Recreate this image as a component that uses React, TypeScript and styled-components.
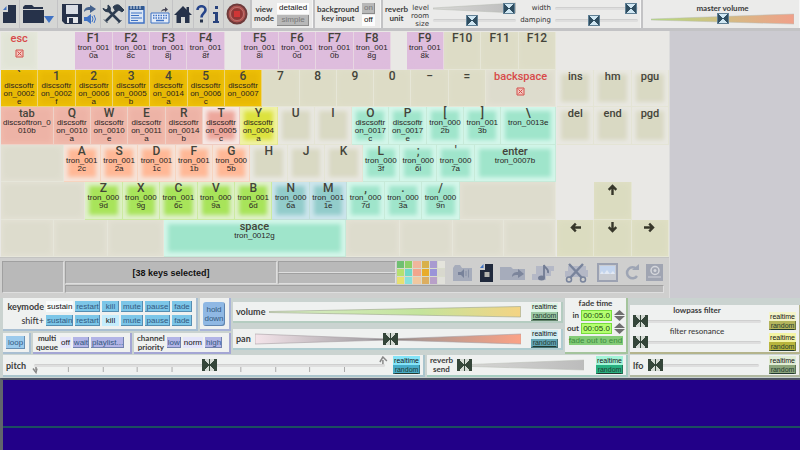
import React, { useState } from "react";
import styled, { createGlobalStyle, css } from "styled-components";

const Global = createGlobalStyle`
  *, *::before, *::after { box-sizing: border-box; }
  body { margin: 0; background: #cfd0cf; font-family: Lato, "Open Sans", sans-serif; color: #333; }
  button, input { font: inherit; color: inherit; margin: 0; padding: 0; border: 0; background: none; }
`;

/* ---------- shell ---------- */
const Page = styled.main`
  display: flex;
  flex-direction: column;
  min-height: 100vh;
`;
const Toolbar = styled.header`
  display: flex;
  gap: 2px;
  height: 31px;
  padding-bottom: 3px;
  background: #c3c3c5;
`;
const IconStrip = styled.nav`
  display: grid;
  grid-template-columns: 19px 37px 42px 24px 21px 24px 20px 14px 14px 26px;
  gap: 1px;
  flex: none;
`;
const ToolButton = styled.button`
  display: grid;
  place-items: center;
  background: #d5d6d4;
  svg { display: block; }
`;
const TopPanel = styled.section<{ $basis: number; $grow?: boolean }>`
  flex: ${(p) => (p.$grow ? 1 : 0)} 0 ${(p) => p.$basis}px;
  display: flex;
  align-items: center;
  gap: 3px;
  padding: 0 2px;
  background: #ebebea;
  border-right: 1px solid #f6f6f6;
  min-width: 0;
`;
const Caption = styled.span<{ $right?: boolean; $light?: boolean; $two?: boolean }>`
  font-size: ${(p) => (p.$two ? 8 : 9)}px;
  line-height: 9px;
  font-weight: ${(p) => (p.$light ? 500 : 700)};
  text-align: ${(p) => (p.$right ? "right" : "center")};
  white-space: nowrap;
  color: #3c3c3c;
`;
const Tiny = styled.label`
  font: 7px/8px "DejaVu Sans", sans-serif;
  text-align: right;
  white-space: nowrap;
  color: #333;
`;
const ToggleStack = styled.div`
  display: flex;
  flex-direction: column;
  gap: 1px;
`;
const Toggle = styled.button<{ $on?: boolean }>`
  height: 11px;
  padding: 0 2px;
  font: 8px/10px "Liberation Sans", sans-serif;
  color: ${(p) => (p.$on ? "#111" : "#777")};
  background: ${(p) => (p.$on ? "#fcfcfc" : "#b8b8b8")};
  box-shadow: ${(p) => (p.$on ? "none" : "inset -1px -1px #8a8a8a")};
`;
const ReverbGrid = styled.div`
  flex: 1;
  min-width: 0;
  display: grid;
  grid-template-columns: 18px minmax(0, 1fr) 31px minmax(0, 1fr);
  grid-template-rows: 12px 12px;
  align-items: center;
  column-gap: 4px;
`;
const Master = styled.div`
  flex: 1;
  display: flex;
  flex-direction: column;
  align-items: center;
  padding: 0 3px 0 6px;
`;

/* ---------- sliders ---------- */
const SliderBox = styled.div`
  flex: 1;
  min-width: 0;
  width: 100%;
  display: grid;
  align-items: center;
  > * { grid-area: 1 / 1; }
`;
const Wedge = styled.svg`
  display: block;
  width: 100%;
  height: 12px;
`;
const Line = styled.div`
  height: 3px;
  border-radius: 2px;
  background: #dedede;
  border-top: 1px solid #cfcfcf;
`;
const Range = styled.input<{ $steel?: boolean }>`
  appearance: none;
  width: 100%;
  min-width: 0;
  height: 12px;
  background: transparent;
  &::-webkit-slider-thumb {
    appearance: none;
    width: ${(p) => (p.$steel ? 12 : 15)}px;
    height: ${(p) => (p.$steel ? 11 : 12)}px;
    ${(p) =>
      p.$steel
        ? css`
            border: 1px solid #5f7f94;
            background: conic-gradient(from 45deg, #2f4d60 90deg, #cfe6f2 0 180deg, #2f4d60 0 270deg, #cfe6f2 0);
          `
        : css`
            background:
              linear-gradient(#35463a, #35463a) center / 1px 100% no-repeat,
              conic-gradient(from 42deg, #35463a 96deg, #d4dad4 0 180deg, #35463a 0 276deg, #d4dad4 0);
          `}
  }
`;

type Shape = "line" | "grow" | "pan";
function Slider({ label, id, value, shape = "line", steel, from = "#d8d8d6", to = "#bcbcbc" }: {
  label: string; id: string; value: number; shape?: Shape; steel?: boolean; from?: string; to?: string;
}) {
  const [v, setV] = useState(value);
  return (
    <SliderBox>
      {shape === "line" && <Line />}
      {shape === "grow" && (
        <Wedge viewBox="0 0 100 12" preserveAspectRatio="none" aria-hidden>
          <defs><linearGradient id={`${id}-g`}><stop offset="0" stopColor={from} /><stop offset="1" stopColor={to} /></linearGradient></defs>
          <polygon points="0,6 100,1 100,11 0,7" fill={`url(#${id}-g)`} stroke="#b8bcb4" strokeWidth="0.5" vectorEffect="non-scaling-stroke" />
        </Wedge>
      )}
      {shape === "pan" && (
        <Wedge viewBox="0 0 100 12" preserveAspectRatio="none" aria-hidden>
          <defs>
            <linearGradient id={`${id}-g`}>
              <stop offset="0" stopColor="#f4e4ea" /><stop offset=".42" stopColor="#a8a4a8" />
              <stop offset=".5" stopColor="#777" /><stop offset=".62" stopColor="#b09890" /><stop offset="1" stopColor="#fba286" />
            </linearGradient>
          </defs>
          <polygon points="0,1 50,6 100,1 100,11 50,7 0,11" fill={`url(#${id}-g)`} stroke="#a8a0a4" strokeWidth="0.6" vectorEffect="non-scaling-stroke" />
        </Wedge>
      )}
      <Range type="range" id={id} aria-label={label} min={0} max={100} value={v} $steel={steel} onChange={(e) => setV(+e.target.value)} />
    </SliderBox>
  );
}

/* ---------- keyboard ---------- */
const Upper = styled.div`
  display: flex;
  height: 267px;
`;
const Deck = styled.div`
  flex: 670 1 0;
  min-width: 0;
  display: flex;
  flex-direction: column;
  background: #e9e8e5;
  border-right: 1px solid #dcdcdc;
`;
const SidePane = styled.aside`
  flex: 130 1 0;
  background: #cccbd1;
`;
const Boards = styled.div`
  display: flex;
  gap: 1px;
  height: 226px;
  padding: 1px 0 0 1px;
`;
const Board = styled.div<{ $span: number }>`
  flex: ${(p) => p.$span} 1 0;
  min-width: 0;
  display: grid;
  grid-template-rows: repeat(6, 1fr);
`;
const KeyRow = styled.div`
  display: flex;
  min-height: 0;
`;
const Gap = styled.div<{ $w: number }>`
  flex: ${(p) => p.$w} 1 0;
`;
const tones: Record<string, [string, string, boolean]> = {
  pink: ["#debddd", "#debddd", false],
  gold: ["#e7b805", "#efc107", false],
  salmon: ["#edb3a6", "#f1bcae", false],
  beige: ["#dddcc6", "#dfdec9", false],
  pale: ["#dddccd", "#e3e1d4", false],
  mint: ["#e1e4d6", "#e5e7dc", false],
  rose: ["#eda79c", "#f6e9e6", true],
  lemon: ["#dce23e", "#f0f2a8", true],
  soft: ["#d9d9c3", "#e9e8e2", true],
  teal: ["#9fe5cb", "#d4f6ea", true],
  peach: ["#ffb896", "#f6e4da", true],
  lime: ["#a8e45a", "#e0f0cc", true],
  aqua: ["#92cccb", "#cde5ec", true],
  sand: ["#dbdcc0", "#dfdfc4", false],
};
const Key = styled.button<{ $w: number; $tone: string; $red?: boolean }>`
  flex: ${(p) => p.$w} 1 0;
  min-width: 0;
  padding-top: 1px;
  display: flex;
  flex-direction: column;
  align-items: center;
  justify-content: flex-start;
  color: ${(p) => (p.$red ? "#d84a4a" : "#44443a")};
  border: solid rgba(240, 240, 232, 0.5);
  border-width: 0 1px 1px 0;
  background: ${(p) => tones[p.$tone][0]};
  box-shadow: ${(p) => (tones[p.$tone][2] ? `inset 0 0 4px 4px ${tones[p.$tone][1]}` : `inset 0 0 5px 2px ${tones[p.$tone][1]}`)};
`;
const KeyName = styled.span<{ $small?: boolean }>`
  font: 500 12px/11px Roboto, sans-serif;
  font-size: ${(p) => (p.$small ? 11 : 12)}px;
`;
const Sample = styled.span`
  font: 8px/8px "Liberation Sans", sans-serif;
  color: #2a1f1f;
  white-space: nowrap;
  text-align: center;
`;
type K = [name: string, width: number, tone: string, sample?: string];
/* Key widths are shares of a 2220-unit row; U is one standard key. */
const U = 149;
const rows: K[][] = [
  [["esc", U, "mint"], ["", 151, "gap"], ["F1", U, "pink", "tron_001 0a"], ["F2", U, "pink", "tron_001 8c"], ["F3", U, "pink", "tron_001 8j"], ["F4", U, "pink", "tron_001 8f"], ["", 68, "gap"],
    ["F5", U, "pink", "tron_001 8i"], ["F6", U, "pink", "tron_001 0d"], ["F7", U, "pink", "tron_001 0b"], ["F8", U, "pink", "tron_001 8g"], ["", 64, "gap"], ["F9", U, "pink", "tron_001 8k"], ["F10", U, "beige"], ["F11", U, "beige"], ["F12", U, "beige"]],
  [["`", U, "gold", "discsoftr on_0002 e"], ["1", U, "gold", "discsoftr on_0002 f"], ["2", U, "gold", "discsoftr on_0006 a"], ["3", U, "gold", "discsoftr on_0005 b"], ["4", U, "gold", "discsoftr on_0014 a"], ["5", U, "gold", "discsoftr on_0006 c"], ["6", U, "gold", "discsoftr on_0007"],
    ["7", U, "beige"], ["8", U, "beige"], ["9", U, "beige"], ["0", U, "beige"], ["−", U, "beige"], ["=", U, "beige"], ["backspace", 283, "pale"]],
  [["tab", 212, "salmon", "discsoftron_0 010b"], ["Q", U, "salmon", "discsoftr on_0010 a"], ["W", U, "salmon", "discsoftr on_0010 e"], ["E", U, "salmon", "discsoftr on_0011 a"], ["R", U, "salmon", "discsoftr on_0014 b"], ["T", U, "rose", "discsoftr on_0005 c"], ["Y", U, "lemon", "discsoftr on_0004 a"],
    ["U", U, "soft"], ["I", U, "soft"], ["O", U, "teal", "discsoftr on_0017 c"], ["P", U, "teal", "discsoftr on_0017 e"], ["[", U, "teal", "tron_000 2b"], ["]", U, "teal", "tron_001 3b"], ["\\", 220, "teal", "tron_0013e"]],
  [["", 252, "pale"], ["A", U, "peach", "tron_001 2c"], ["S", U, "peach", "tron_001 2a"], ["D", U, "peach", "tron_001 1c"], ["F", U, "peach", "tron_001 1b"], ["G", U, "peach", "tron_000 5b"], ["H", U, "soft"], ["J", U, "soft"], ["K", U, "soft"],
    ["L", U, "teal", "tron_000 3f"], [";", U, "teal", "tron_000 6i"], ["'", U, "teal", "tron_000 7a"], ["enter", 329, "teal", "tron_0007b"]],
  [["", 340, "pale"], ["Z", U, "lime", "tron_000 9d"], ["X", U, "lime", "tron_000 9g"], ["C", U, "lime", "tron_001 6c"], ["V", U, "lime", "tron_000 9a"], ["B", U, "lime", "tron_001 6d"], ["N", U, "aqua", "tron_000 6a"], ["M", U, "aqua", "tron_001 1e"],
    [",", U, "teal", "tron_000 7d"], [".", U, "teal", "tron_000 3a"], ["/", U, "teal", "tron_000 9n"], ["", 390, "pale"]],
  [["", 212, "pale"], ["", 212, "pale"], ["", 224, "pale"], ["space", 736, "teal", "tron_0012g"], ["", 213, "pale"], ["", 211, "pale"], ["", 206, "pale"], ["", 206, "pale"]],
];
const navRows: K[][] = [
  [],
  [["ins", U, "soft"], ["hm", U, "soft"], ["pgu", U, "soft"]],
  [["del", U, "soft"], ["end", U, "soft"], ["pgd", U, "soft"]],
  [],
  [["", U, "gap"], ["up", U, "sand"], ["", U, "gap"]],
  [["left", U, "sand"], ["down", U, "sand"], ["right", U, "sand"]],
];
const turn: Record<string, number> = { up: 0, right: 90, down: 180, left: 270 };

function KeyCap({ k: [name, w, tone, sample] }: { k: K }) {
  if (tone === "gap") return <Gap $w={w} />;
  const red = name === "esc" || name === "backspace";
  return (
    <Key $w={w} $tone={tone} $red={red} aria-label={name || "unassigned"}>
      {name in turn ? (
        <svg width="13" height="13" viewBox="0 0 13 13" aria-hidden>
          <path transform={`rotate(${turn[name]} 6.5 6.5)`} d="M6.5 12V3M2.700 6.800 6.500 3 10.300 6.800" fill="none" stroke="#37372a" strokeWidth="2.400" />
        </svg>
      ) : (
        <KeyName $small={name.length > 1 && name[0] !== "F"}>{name}</KeyName>
      )}
      {sample && <Sample>{sample.split(" ").map((s, i) => <React.Fragment key={i}>{i > 0 && <br />}{s}</React.Fragment>)}</Sample>}
      {red && (
        <svg width="9" height="16" viewBox="0 0 9 16" aria-hidden>
          <path d="M1 6h7v7H1zM2.5 7.5l4 4M6.500 7.500l-4 4" fill="#f3c5be" stroke="#d24f4a" />
        </svg>
      )}
    </Key>
  );
}

/* ---------- status strip ---------- */
const Strip = styled.div`
  flex: 1;
  display: grid;
  grid-template-columns: 62px 1fr;
  gap: 1px;
  padding: 3px 5px 5px 2px;
  background: #cfcfce;
  border-top: 1px solid #c4c4c2;
`;
const Well = styled.div`
  background: #b9b9b9;
  border: 1px solid #a0a0a0;
  border-right-color: #dedede;
  border-bottom-color: #dedede;
`;
const StripRight = styled.div`
  display: grid;
  grid-template-rows: 23px 1fr;
  gap: 1px;
`;
const StripTop = styled.div`
  display: grid;
  grid-template-columns: 212px 1fr 48px 218px;
  column-gap: 1px;
`;
const Message = styled(Well)`
  display: grid;
  place-items: center;
  font: bold 9px/12px "Liberation Sans", sans-serif;
  color: #111;
`;
const Split = styled.div`
  display: grid;
  grid-template-rows: 1fr 1fr;
`;
const Palette = styled.div`
  display: grid;
  grid-template-columns: repeat(6, 1fr);
  grid-template-rows: repeat(3, 1fr);
  gap: 1px;
  background: #d8dccb;
`;
const Swatch = styled.span<{ $c: string }>`
  background: ${(p) => p.$c};
`;
const swatches = ["#6fbf72", "#8ccf68", "#f0b59c", "#d8b04a", "#a89ad0", "#e4e4dc", "#b5e070", "#6fd8c8", "#f2a58c", "#e8ac28", "#9a94d8", "#d8d8ce", "#e8e070", "#88e0dc", "#f0c8a0", "#dcae60", "#b8a0c8", "#e0e0da"];
const StripIcons = styled.div`
  display: grid;
  grid-template-columns: 32px 16px 36px 28px 36px 26px 24px 20px;
  align-items: center;
  justify-items: center;
`;
const IconButton = styled.button`
  display: grid;
  place-items: center;
  svg { display: block; }
`;

/* ---------- control panels ---------- */
const Controls = styled.div`
  display: flex;
  flex-direction: column;
  gap: 3px;
  padding: 0 1px 3px 3px;
  background: #cad3d0;
`;
const ControlRow = styled.div`
  display: flex;
  gap: 4px;
`;
const Column = styled.div<{ $basis?: number; $gap: number; $pad?: number }>`
  flex: ${(p) => (p.$basis ? `0 0 ${p.$basis}px` : "1 1 0")};
  min-width: 0;
  display: flex;
  flex-direction: column;
  gap: ${(p) => p.$gap}px;
  padding: ${(p) => p.$pad ?? 0}px 0;
`;
const PanelLine = styled.div`
  display: flex;
  gap: 4px;
`;
const Panel = styled.section<{ $edge: string; $grow?: number; $basis?: number; $h?: number; $gap?: number; $top?: number }>`
  flex: ${(p) => p.$grow ?? 0} ${(p) => (p.$grow ? 1 : 0)} ${(p) => (p.$basis != null ? p.$basis + "px" : "auto")};
  min-width: 0;
  height: ${(p) => (p.$h ? p.$h + "px" : "auto")};
  margin-top: ${(p) => p.$top ?? 0}px;
  display: flex;
  align-items: center;
  gap: ${(p) => p.$gap ?? 4}px;
  padding: 0 3px;
  background: #eff1f0;
  box-shadow: 1px 1px 0 1px ${(p) => p.$edge};
`;
const ModeGrid = styled.div`
  flex: 1;
  display: grid;
  grid-template-columns: 38px 27px 25px 17px 22px 25px 20px;
  column-gap: 2px;
  row-gap: 3px;
  align-items: center;
`;
const Chip = styled.button<{ $c: string; $on?: string | boolean; $h?: number }>`
  height: ${(p) => p.$h ?? 11}px;
  padding: 0 1px;
  font: 8px/10px "Liberation Sans", sans-serif;
  white-space: nowrap;
  color: ${(p) => (p.$on ? "#111" : "#33597f")};
  background: ${(p) => (p.$on ? p.$on : p.$c)};
  box-shadow: ${(p) => (p.$on ? "none" : "inset -1px -1px rgba(40, 70, 110, 0.45)")};
`;
const PadChip = styled(Chip)`
  padding: 0 2px;
`;
const HoldChip = styled(Chip)`
  width: 22px;
  padding: 0;
  line-height: 9px;
  white-space: normal;
  border-radius: 3px;
`;
const Mode = styled.div`
  display: flex;
  flex-direction: column;
  flex: none;
  width: 27px;
`;
const ModeButton = styled.button<{ $c: string; $on?: boolean }>`
  height: 9px;
  font: 7px/8px "Liberation Sans", sans-serif;
  color: ${(p) => (p.$on ? "#111" : "#223a30")};
  text-decoration: ${(p) => (p.$on ? "none" : "underline")};
  background: ${(p) => p.$c};
  box-shadow: ${(p) => (p.$on ? "none" : "inset -1px -1px rgba(30, 50, 40, 0.45)")};
`;
function RealRandom({ on, off }: { on: string; off: string }) {
  return (
    <Mode>
      <ModeButton $c={on} $on>realtime</ModeButton>
      <ModeButton $c={off}>random</ModeButton>
    </Mode>
  );
}
const FadePanel = styled(Panel)`
  flex-direction: column;
  gap: 2px;
  padding: 1px 2px;
`;
const FadeRow = styled.div`
  display: grid;
  grid-template-columns: 13px 31px 11px;
  gap: 2px;
  align-items: center;
  justify-items: end;
`;
const TimeInput = styled.input`
  width: 31px;
  height: 11px;
  text-align: center;
  font: 8px/9px "Liberation Sans", sans-serif;
  color: #1e4a10;
  background: #b4ff70;
  border: 1px solid #78dc3c;
`;
const Spin = styled.div`
  display: flex;
  flex-direction: column;
  gap: 1px;
  button { height: 5px; display: block; }
  svg { display: block; }
`;
const FadeEnd = styled.button`
  width: 54px;
  height: 9px;
  font: 8px/9px "Liberation Sans", sans-serif;
  color: #3f8a3f;
  background: #84cc78;
  white-space: nowrap;
`;
const FilterBody = styled.div`
  flex: 1;
  align-self: flex-start;
  min-width: 0;
  padding-top: 1px;
  display: flex;
  flex-direction: column;
  text-align: center;
`;
const FilterRow = styled.div`
  display: flex;
`;
const ModePair = styled.div`
  display: flex;
  flex-direction: column;
  gap: 3px;
  padding-top: 6px;
`;
const Spacer = styled.div<{ $w: number }>`
  flex: none;
  width: ${(p) => p.$w}px;
`;
const PitchTrack = styled.div`
  flex: 1;
  min-width: 0;
  display: grid;
  align-items: center;
  > * { grid-area: 1 / 1; }
`;
const Ticks = styled.svg`
  width: 100%;
  height: 18px;
  display: block;
`;
const PitchInner = styled.div`
  display: flex;
  padding: 0 4px;
`;
const VolumeTrack = styled.div`
  flex: 1;
  min-width: 0;
`;
const Wave = styled.section`
  flex: 1;
  min-height: 72px;
  display: grid;
  grid-template-rows: 46px 2px 1fr;
  background: #220088;
  border-top: 2px solid #4e5266;
  border-left: 3px solid #60646c;
`;
const Zero = styled.div`
  background: #1c4e60;
`;

/* ---------- drawings ---------- */
const D = "#26324a";
const B = "#3f72c4";
const P = "#a6acbb";
const toolIcons: [string, React.ReactNode][] = [
  ["New", <svg width="15" height="20" viewBox="0 0 15 20"><path d="M6 1h8v18H1V8h5z" fill={D} /><path d="M1 6 4.500 2v4z" fill={B} /></svg>],
  ["Open", <svg width="33" height="20" viewBox="0 0 33 20"><path d="M1 5V3l2-2h7l2 2h9v2z" fill={D} /><path d="M1 6h21v13H1z" fill={D} /><path d="M22 12h10l-5 7z" fill={B} /></svg>],
  ["Save and sound", <svg width="37" height="21" viewBox="0 0 37 21"><path d="M1 0h20v20H4l-3-3z" fill={D} /><path d="M5 1h12v9H5z" fill="#d9dde4" /><path d="M6 13h11v6H6z" fill="#e4e6ea" /><path d="M8 14h4v5H8z" fill={D} /><path d="M23 8c0-4 3-5 6-5V1l6 4-6 4V6c-3 0-4 0-6 2z" fill="#44618c" /><path d="M23 13h3l4-3v10l-4-3h-3z" fill={B} /><path d="M31 12q2 3 0 6M33 11q3 4 0 8" stroke={B} fill="none" /></svg>],
  ["Tools", <svg width="22" height="20" viewBox="0 0 22 20"><path d="M5 5 18 18M15 6 4 17" stroke="#2d3c50" strokeWidth="2.600" /><path d="M1 4a4.500 4.500 0 0 0 7 3 4.500 4.500 0 0 0-2-6v3.500L4 6 1.500 4.500zM11 3c3-3 6-3 8 0l3 3-2 2-3-2-3 1.500zM2 15.500l3.500 3.500M16 19.500l3.500-3.500" fill="#2d3c50" stroke="#2d3c50" /></svg>],
  ["Notes", <svg width="17" height="19" viewBox="0 0 17 19"><path d="M1 2h15v16H1z" fill="#dce6f4" stroke={B} strokeWidth="1.500" /><path d="M1 1h15v4H1z" fill="#31588f" /><path d="M3 0v4M6 0v4M9 0v4M12 0v4" stroke="#dfe6ef" /><path d="M3 8h11M3 10.500h8M3 13h11M3 15.500h7" stroke={B} strokeWidth="1.200" /></svg>],
  ["Keyboard", <svg width="20" height="19" viewBox="0 0 20 19"><path d="M1 8h18v10H1z" fill="#e4ecf8" stroke={B} /><path d="M3 10.500h14M3 13h14" stroke={B} strokeWidth="1.500" strokeDasharray="1.500 1" /><path d="M6 15.500h8" stroke={B} strokeWidth="1.500" /><path d="M11 7c1-3 2-3 4-3V2l3 2.500L15 7V5.500c-2 0-3 0-4 1.500z" fill="#445" /></svg>],
  ["Home", <svg width="18" height="17" viewBox="0 0 18 17"><path d="M9 0 18 9h-2.500v8H11v-6H7v6H2.500V9H0z" fill={D} /><path d="M12.500 1h2.500v5h-2.500z" fill={D} /></svg>],
  ["Help", <svg width="11" height="18" viewBox="0 0 11 18"><path d="M1.500 5C1.500 0 9.500 0 9.500 5c0 3-4 3.500-4 7.500" fill="none" stroke="#26448a" strokeWidth="2.600" /><path d="M4 14.500h3v3H4z" fill={D} /></svg>],
  ["Info", <svg width="7" height="17" viewBox="0 0 7 17"><path d="M2 0h3v3H2zM0 6h5v9h1v2H0v-2h2V8H0z" fill="#28427c" /></svg>],
  ["Record", <svg width="22" height="22" viewBox="0 0 22 22"><circle cx="11" cy="11" r="9.500" fill="#b05552" stroke="#6e3a3a" strokeWidth="2" /><circle cx="11" cy="11" r="6.500" fill="#8f3736" stroke="#c98984" strokeWidth=".7" /><path d="M8 8h6v6H8z" fill="#d03636" /></svg>],
];
const stripIcons: [string, React.ReactNode][] = [
  ["Sound folder", <svg width="21" height="18" viewBox="0 0 21 18"><path d="M1 4l2-3h5l2 3h10v13H1z" fill={P} /><path d="M6 8h3l3-3v9l-3-3H6z" fill="#78829a" /><path d="M14 7v5M16.500 5.500v8" stroke="#8891a6" /></svg>],
  ["Sample file", <svg width="15" height="19" viewBox="0 0 15 19"><path d="M6 1h8v18H1V7h5z" fill="#20293c" /><path d="M1 5l3.500-4v4z" fill={B} /><path d="M5.500 9h5v5h-5z" fill="#b6b6b0" /></svg>],
  ["Export", <svg width="25" height="16" viewBox="0 0 25 16"><path d="M0 2h11l2 2h12v11H0z" fill={P} /><path d="M12 12c0-4 3-5 6-5V4l6 5-6 4v-3c-3 0-4 0-6 2z" fill="#7c859b" /></svg>],
  ["Music", <svg width="24" height="19" viewBox="0 0 24 19"><path d="M4 3h18v5h-3v5h-5v4H0v-6h4z" fill="#b4b8c6" /><path d="M12 15V2c1 4 5 3 4 8" fill="none" stroke="#727c94" strokeWidth="1.800" /><ellipse cx="9.500" cy="15" rx="3.500" ry="2.500" fill="#727c94" /></svg>],
  ["Cut", <svg width="25" height="20" viewBox="0 0 25 20"><path d="M4 3h18v4h2v7H1V8h3z" fill="#b4b8c6" /><path d="M5 1l13 14M19 1 6 15" stroke="#79849c" strokeWidth="2.500" /><circle cx="5" cy="16.500" r="2.500" fill="none" stroke="#79849c" strokeWidth="1.500" /><circle cx="19" cy="16.500" r="2.500" fill="none" stroke="#79849c" strokeWidth="1.500" /></svg>],
  ["Picture", <svg width="21" height="19" viewBox="0 0 21 19"><path d="M1 1h19v17H1z" fill="#c9ccd2" stroke="#9ca2b2" strokeWidth="2" /><path d="M3 3h15v8H3z" fill="#c4d5ee" /><path d="M3 11l2-3 2 3 3-4 3 4 3-3 2 3" fill="#e2e9f4" /></svg>],
  ["Refresh", <svg width="16" height="17" viewBox="0 0 16 17"><path d="M12.500 5A5.500 5.500 0 1 0 13 12" fill="none" stroke="#9ea5b4" strokeWidth="2.500" /><path d="M8 6h7V0z" fill="#9ea5b4" /></svg>],
  ["Speaker", <svg width="19" height="19" viewBox="0 0 19 19"><path d="M1 1h17v17H1z" fill="#a0a5b2" /><circle cx="10" cy="7.500" r="4" fill="none" stroke="#d5d7dc" strokeWidth="1.500" /><circle cx="10" cy="7.500" r="1.500" fill="#d5d7dc" /><path d="M3 14h13" stroke="#c0c3cb" strokeWidth="1.500" /></svg>],
];

const blue = "#7cc6e8";
const violet = "#b2b4e6";
const words = ["sustain", "restart", "kill", "mute", "pause", "fade"];

function TimeField({ id, label }: { id: string; label: string }) {
  const [t, setT] = useState("00:05.0");
  return (
    <FadeRow>
      <Caption as="label" htmlFor={id} $two>{label}</Caption>
      <TimeInput id={id} value={t} onChange={(e) => setT(e.target.value)} />
      <Spin>
        <button aria-label={`increase fade ${label}`}><svg width="11" height="5" viewBox="0 0 11 5"><path d="M0 5 5.500 0 11 5z" fill="#6f6f6f" /></svg></button>
        <button aria-label={`decrease fade ${label}`}><svg width="11" height="5" viewBox="0 0 11 5"><path d="M0 0 5.500 5 11 0z" fill="#6f6f6f" /></svg></button>
      </Spin>
    </FadeRow>
  );
}

function VolumeWedge() {
  return (
    <Wedge viewBox="0 0 100 12" preserveAspectRatio="none" role="img" aria-label="volume level">
      <defs><linearGradient id="vol-g"><stop offset="0" stopColor="#d8ecc8" /><stop offset=".6" stopColor="#c4e49c" /><stop offset="1" stopColor="#f4d484" /></linearGradient></defs>
      <polygon points="0,5.500 100,0.500 100,11 0,6.500" fill="url(#vol-g)" stroke="#9ca48c" strokeWidth="0.600" vectorEffect="non-scaling-stroke" />
    </Wedge>
  );
}

export default function App() {
  return (
    <>
      <Global />
      <Page>
        <Toolbar>
          <IconStrip>
            {toolIcons.map(([n, i]) => <ToolButton key={n} aria-label={n}>{i}</ToolButton>)}
          </IconStrip>
          <TopPanel $basis={61}>
            <Caption $two>view<br />mode</Caption>
            <ToggleStack><Toggle $on>detailed</Toggle><Toggle>simple</Toggle></ToggleStack>
          </TopPanel>
          <TopPanel $basis={66}>
            <Caption $two>background<br />key input</Caption>
            <ToggleStack><Toggle>on</Toggle><Toggle $on>off</Toggle></ToggleStack>
          </TopPanel>
          <TopPanel $basis={258}>
            <Caption $two>reverb<br />unit</Caption>
            <ReverbGrid>
              <Tiny htmlFor="level">level</Tiny>
              <Slider id="level" label="level" value={99} shape="grow" steel />
              <Tiny htmlFor="width">width</Tiny>
              <Slider id="width" label="width" value={99} steel />
              <Tiny htmlFor="room">room<br />size</Tiny>
              <Slider id="room" label="room size" value={47} steel />
              <Tiny htmlFor="damping">damping</Tiny>
              <Slider id="damping" label="damping" value={46} steel />
            </ReverbGrid>
          </TopPanel>
          <TopPanel $basis={100} $grow>
            <Master>
              <Caption as="label" htmlFor="master" $two>master volume</Caption>
              <Slider id="master" label="master volume" value={50} shape="grow" steel from="#b4dc7c" to="#f0a08a" />
            </Master>
          </TopPanel>
        </Toolbar>

        <Upper>
          <Deck>
            <Boards>
              <Board $span={555}>
                {rows.map((r, i) => <KeyRow key={i}>{r.map((k, j) => <KeyCap key={j} k={k} />)}</KeyRow>)}
              </Board>
              <Board $span={112}>
                {navRows.map((r, i) => <KeyRow key={i}>{r.map((k, j) => <KeyCap key={j} k={k} />)}</KeyRow>)}
              </Board>
            </Boards>
            <Strip>
              <Well />
              <StripRight>
                <StripTop>
                  <Message>[38 keys selected]</Message>
                  <Split><Well /><Well /></Split>
                  <Palette>{swatches.map((c, i) => <Swatch key={i} $c={c} />)}</Palette>
                  <StripIcons>
                    {stripIcons.map(([n, i]) => <IconButton key={n} aria-label={n}>{i}</IconButton>)}
                  </StripIcons>
                </StripTop>
                <Well />
              </StripRight>
            </Strip>
          </Deck>
          <SidePane />
        </Upper>

        <Controls>
          <ControlRow>
            <Column $basis={226} $gap={4}>
              <PanelLine>
                <Panel $edge="#a9bfd2" $basis={193} $h={31}>
                  <ModeGrid>
                    <Caption $right>keymode</Caption>
                    {words.map((w, i) => <Chip key={w} $c={blue} $on={i === 0 && "#f8fbfc"}>{w}</Chip>)}
                    <Caption $right $light>shift+</Caption>
                    {words.map((w, i) => <Chip key={w} $c={blue} $on={i === 2 && "#c4ecfc"}>{w}</Chip>)}
                  </ModeGrid>
                </Panel>
                <Panel $edge="#a9b4d8" $grow={1} $basis={0} $h={31}>
                  <HoldChip $c="#8fb8e4" $h={24}>hold down</HoldChip>
                </Panel>
              </PanelLine>
              <PanelLine>
                <Panel $edge="#a9bfd2" $basis={26} $h={19} $gap={0}><PadChip $c="#9ccaec" $h={13}>loop</PadChip></Panel>
                <Panel $edge="#a4a6d4" $basis={97} $h={19} $gap={2}>
                  <Caption $two>multi<br />queue</Caption>
                  <Chip $c={violet} $on="#e4e4fa">off</Chip><Chip $c={violet}>wait</Chip><Chip $c={violet}>playlist...</Chip>
                </Panel>
                <Panel $edge="#a4a6d4" $grow={1} $basis={0} $h={19} $gap={2}>
                  <Caption $two>channel<br />priority</Caption>
                  <Chip $c={violet}>low</Chip><Chip $c={violet} $on="#e4e4fa">norm</Chip><Chip $c={violet}>high</Chip>
                </Panel>
              </PanelLine>
            </Column>
            <Column $gap={8} $pad={4}>
              <Panel $edge="#b4ccc0" $h={19}>
                <Caption>volume</Caption>
                <VolumeTrack><VolumeWedge /></VolumeTrack>
                <Spacer $w={2} />
                <RealRandom on="#dcf4e4" off="#9cc8a4" />
              </Panel>
              <Panel $edge="#b0ccd0" $h={19}>
                <Caption>pan</Caption>
                <Slider id="pan" label="pan" value={51} shape="pan" />
                <Spacer $w={2} />
                <RealRandom on="#d0eef4" off="#62a4b4" />
              </Panel>
            </Column>
            <FadePanel $edge="#a4c49c" $basis={61}>
              <Caption $two>fade time</Caption>
              <TimeField id="fin" label="in" />
              <TimeField id="fout" label="out" />
              <FadeEnd>fade out to end</FadeEnd>
            </FadePanel>
            <Panel $edge="#b4b48c" $basis={169} $top={7} $gap={8}>
              <FilterBody>
                <Caption $two>lowpass filter</Caption>
                <FilterRow><Slider id="lp" label="lowpass filter" value={0} /></FilterRow>
                <Caption $light $two>filter resonance</Caption>
                <FilterRow><Slider id="res" label="filter resonance" value={0} /></FilterRow>
              </FilterBody>
              <ModePair>
                <RealRandom on="#f4f4c8" off="#b4b45c" />
                <RealRandom on="#f4f4a4" off="#b8b43c" />
              </ModePair>
            </Panel>
          </ControlRow>
          <ControlRow>
            <Panel $edge="#a9c4cc" $grow={1} $basis={0} $h={20}>
              <Caption>pitch</Caption>
              <PitchTrack>
                <Ticks viewBox="0 0 360 18" preserveAspectRatio="none" aria-hidden>
                  <path d="M38.500 11v5M73.500 11v5M107.500 11v5M142.500 11v5M211.500 11v5M246.500 11v5M280.500 11v5M315.500 11v5" stroke="#aaa" />
                  <path d="M6 10v4M3 12.500l3 4 1-4M354 8V4M351 6l3-5 4 4" fill="none" stroke="#888" strokeWidth="1.500" />
                </Ticks>
                <PitchInner><Slider id="pitch" label="pitch" value={50} /></PitchInner>
              </PitchTrack>
              <RealRandom on="#84e4f8" off="#48acc8" />
            </Panel>
            <Panel $edge="#a4ccc0" $basis={199} $h={20}>
              <Caption $two>reverb<br />send</Caption>
              <Slider id="send" label="reverb send" value={0} shape="grow" />
              <Spacer $w={4} />
              <RealRandom on="#a4f4d8" off="#28b080" />
            </Panel>
            <Panel $edge="#b0b8a0" $basis={169} $h={20}>
              <Caption>lfo</Caption>
              <Slider id="lfo" label="lfo" value={0} />
              <Spacer $w={2} />
              <RealRandom on="#e0ecd4" off="#8ca47c" />
            </Panel>
          </ControlRow>
        </Controls>
        <Wave><span /><Zero /></Wave>
      </Page>
    </>
  );
}
